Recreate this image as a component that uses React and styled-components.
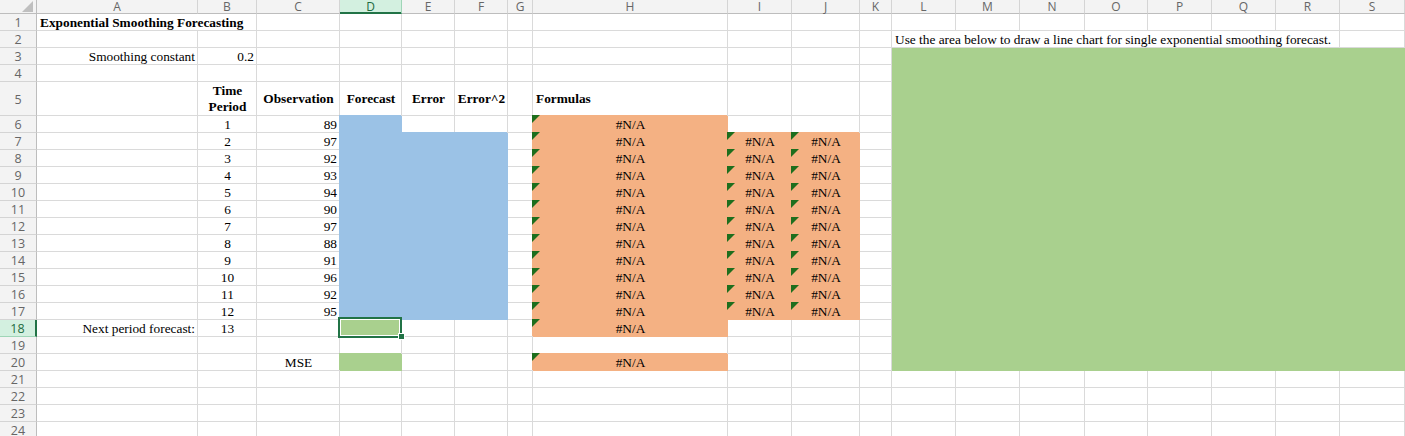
import React from 'react';
import styled, { createGlobalStyle, css } from 'styled-components';

const COLS = ['A','B','C','D','E','F','G','H','I','J','K','L','M','N','O','P','Q','R','S'];
const WIDTHS = [161,59,83,62,53,53,25,195,64,68,32,64,64,65,63,64,64,64,65];

const BLUE = '#9bc2e6';
const ORANGE = '#f4b183';
const GREEN = '#a9d08e';
const GRID = '#dadada';
const XL_GREEN = '#217346';

const Global = createGlobalStyle`
  html, body { margin: 0; padding: 0; background: #fff; overflow: hidden; }
  #root { width: 1405px; height: 436px; overflow: hidden; }
`;

const Sheet = styled.div`
  display: grid;
  grid-template-columns: 37px ${WIDTHS.map((w) => `${w}px`).join(' ')};
  grid-template-rows: 14px repeat(4, 17px) 34px repeat(19, 17px);
  width: 1405px;
  height: 436px;
  overflow: hidden;
  font-family: "Liberation Serif", "Times New Roman", serif;
  font-size: 13.33px;
  color: #000;
`;

const HeaderBase = styled.div`
  box-sizing: border-box;
  background: #f3f3f3;
  font-family: "Open Sans", "Noto Sans", sans-serif;
  font-size: 12px;
  color: #666;
  display: flex;
  align-items: center;
  justify-content: center;
`;

const Corner = styled(HeaderBase)`
  position: relative;
  border-right: 1px solid #bdbdbd;
  border-bottom: 1px solid #bdbdbd;
  svg { position: absolute; right: 3px; bottom: 1px; }
`;

const ColHeader = styled(HeaderBase)`
  line-height: 13px;
  border-right: 1px solid ${(p) => (p.$selected ? '#9fd5b7' : '#d4d4d4')};
  border-bottom: 1px solid ${(p) => (p.$selected ? XL_GREEN : '#bdbdbd')};
  box-shadow: ${(p) => (p.$selected ? `inset 0 -1px 0 ${XL_GREEN}` : 'none')};
  background: ${(p) => (p.$selected ? '#d3f0e0' : '#f3f3f3')};
  color: ${(p) => (p.$selected ? '#1e6b41' : '#666')};
`;

const RowHeader = styled(HeaderBase)`
  font-size: 12.5px;
  padding-top: 1px;
  border-right: ${(p) => (p.$selected ? `2px solid ${XL_GREEN}` : '1px solid #bdbdbd')};
  border-bottom: 1px solid ${(p) => (p.$selected ? '#9fd5b7' : '#d4d4d4')};
  background: ${(p) => (p.$selected ? '#d3f0e0' : '#f3f3f3')};
  color: ${(p) => (p.$selected ? '#1e6b41' : '#666')};
`;

const justify = { left: 'flex-start', center: 'center', right: 'flex-end' };

const Cell = styled.div`
  position: relative;
  box-sizing: border-box;
  display: flex;
  align-items: ${(p) => (p.$middle ? 'center' : 'flex-end')};
  justify-content: ${(p) => justify[p.$align || 'left']};
  text-align: ${(p) => p.$align || 'left'};
  padding: 0 2px 0 3px;
  line-height: 15px;
  white-space: nowrap;
  font-weight: ${(p) => (p.$bold ? 700 : 400)};
  background: ${(p) => p.$fill || '#fff'};
  border-right: 1px solid ${(p) => p.$fill || GRID};
  border-bottom: 1px solid ${(p) => p.$fill || GRID};
  box-shadow: ${(p) => (p.$fill ? `-1px -1px 0 0 ${p.$fill}` : 'none')};
  grid-column: ${(p) => (p.$span ? `span ${p.$span}` : 'auto')};
  ${(p) =>
    p.$error &&
    css`
      &::before {
        content: '';
        position: absolute;
        top: -1px;
        left: -1px;
        width: 0;
        height: 0;
        border-top: 8px solid #1d6e1d;
        border-right: 8px solid transparent;
      }
    `}
`;

const Wrapped = styled.span`
  white-space: normal;
  line-height: 16px;
`;

const Selection = styled.div`
  position: absolute;
  z-index: 3;
  top: -3px;
  left: -2px;
  right: -1px;
  bottom: -2px;
  border: 2px solid ${XL_GREEN};
  box-shadow: inset 0 0 0 1px #fff;
  pointer-events: none;
`;

const FillHandle = styled.div`
  position: absolute;
  z-index: 4;
  right: -3px;
  bottom: -3px;
  width: 5px;
  height: 5px;
  background: ${XL_GREEN};
  box-shadow: 0 0 0 1px #fff;
`;

const ChartArea = styled.div`
  grid-column: 13 / span 8;
  grid-row: 4 / span 18;
  background: ${GREEN};
  box-shadow: -1px -1px 0 0 ${GREEN};
`;

const observations = [89, 97, 92, 93, 94, 90, 97, 88, 91, 96, 92, 95];

function buildCells() {
  const m = {};
  const set = (k, v) => (m[k] = { ...(m[k] || {}), ...v });
  set('A1', { text: 'Exponential Smoothing Forecasting', bold: true, span: 2 });
  set('A3', { text: 'Smoothing constant', align: 'right' });
  set('B3', { text: '0.2', align: 'right' });
  set('B5', { text: 'Time Period', bold: true, align: 'center', wrap: true });
  set('C5', { text: 'Observation', bold: true, align: 'center' });
  set('D5', { text: 'Forecast', bold: true, align: 'center' });
  set('E5', { text: 'Error', bold: true, align: 'center' });
  set('F5', { text: 'Error^2', bold: true, align: 'center' });
  set('H5', { text: 'Formulas', bold: true });
  observations.forEach((v, i) => {
    const r = 6 + i;
    set(`B${r}`, { text: String(i + 1), align: 'center' });
    set(`C${r}`, { text: String(v), align: 'right' });
    set(`D${r}`, { fill: BLUE });
    if (r >= 7) {
      set(`E${r}`, { fill: BLUE });
      set(`F${r}`, { fill: BLUE });
      set(`I${r}`, { fill: ORANGE, text: '#N/A', align: 'center', error: true });
      set(`J${r}`, { fill: ORANGE, text: '#N/A', align: 'center', error: true });
    }
  });
  for (let r = 6; r <= 18; r++) set(`H${r}`, { fill: ORANGE, text: '#N/A', align: 'center', error: true });
  set('A18', { text: 'Next period forecast:', align: 'right' });
  set('B18', { text: '13', align: 'center' });
  set('D18', { fill: GREEN, selected: true });
  set('C20', { text: 'MSE', align: 'center' });
  set('D20', { fill: GREEN });
  set('H20', { fill: ORANGE, text: '#N/A', align: 'center', error: true });
  set('L2', {
    text: 'Use the area below to draw a line chart for single exponential smoothing forecast.',
    span: 7,
  });
  return m;
}

const CELLS = buildCells();

function CornerMark() {
  return (
    <svg width="11" height="11" viewBox="0 0 11 11">
      <path d="M11 0 L11 11 L0 11 Z" fill="#bfbfbf" />
    </svg>
  );
}

export default function App() {
  const items = [];
  items.push(
    <Corner key="corner">
      <CornerMark />
    </Corner>
  );
  COLS.forEach((c) => items.push(<ColHeader key={`h-${c}`} $selected={c === 'D'}>{c}</ColHeader>));

  for (let r = 1; r <= 24; r++) {
    items.push(
      <RowHeader key={`r-${r}`} $selected={r === 18}>
        {r}
      </RowHeader>
    );
    let skip = 0;
    COLS.forEach((c, ci) => {
      if (skip > 0) {
        skip--;
        return;
      }
      if (r >= 3 && r <= 20 && ci >= 11) return; // chart area
      const d = CELLS[`${c}${r}`] || {};
      if (d.span) skip = d.span - 1;
      items.push(
        <Cell
          key={`${c}${r}`}
          $fill={d.fill}
          $bold={d.bold}
          $align={d.align}
          $span={d.span}
          $error={d.error}
          $middle={r === 5}
        >
          {d.wrap ? <Wrapped>{d.text}</Wrapped> : d.text}
          {d.selected && (
            <>
              <Selection />
              <FillHandle />
            </>
          )}
        </Cell>
      );
    });
  }

  return (
    <>
      <Global />
      <Sheet>
        {items}
        <ChartArea />
      </Sheet>
    </>
  );
}
